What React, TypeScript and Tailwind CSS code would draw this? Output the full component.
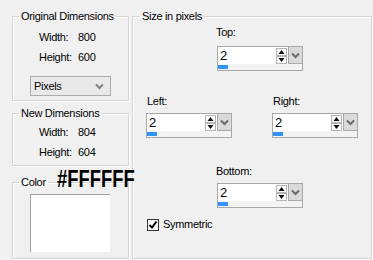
import React from "react";

const groupCls =
  "border border-[#d5d5d5] shadow-[inset_1px_1px_0_#fff,1px_1px_0_#fff] p-0 m-0 min-w-0";
const legendCls = "px-[2px] leading-[13px]";

const Row = ({ label, value }: { label: string; value: string }) => (
  <div className="flex leading-[13px] pl-[26px]">
    <span className="w-[39px]">{label}</span>
    <span>{value}</span>
  </div>
);

const Arrows = () => (
  <svg width="12" height="17" viewBox="0 0 12 17" className="block">
    <rect x="0.5" y="0.5" width="10" height="7" fill="#fff" stroke="#b5b5b5" />
    <rect x="0.5" y="8.5" width="10" height="7" fill="#fff" stroke="#b5b5b5" />
    <path d="M5.5 2 L8.5 6 L2.5 6 Z" fill="#111" />
    <path d="M2.5 10 L8.5 10 L5.5 14 Z" fill="#111" />
  </svg>
);

const Chevron = ({ color = "#6a6a6a" }: { color?: string }) => (
  <svg width="9" height="7" viewBox="0 0 9 7" className="block">
    <path d="M1 1.5 L4.5 5 L8 1.5" fill="none" stroke={color} strokeWidth="2" />
  </svg>
);

const Spin = () => (
  <div className="w-[86px] h-[25px] border border-[#a8a8a8] bg-[#f3f3f3] flex flex-col">
    <div className="flex h-[17px]">
      <div className="flex-1 bg-white text-[13px] leading-[17px] pl-[2px]">2</div>
      <div className="bg-white pt-px">
        <Arrows />
      </div>
      <div className="w-[14px] bg-[#dadada] border-l border-b border-[#a8a8a8] flex items-center justify-center">
        <Chevron />
      </div>
    </div>
    <div className="flex-1 pt-[1px] pl-0">
      <div className="w-[10px] h-[4px] bg-[#3394f5]" />
    </div>
  </div>
);

export default function App() {
  return (
    <div
      className="w-[373px] h-[260px] bg-[#f0f0f0] text-[11px] tracking-[-0.3px] text-black flex pl-[12px] pt-[10px] overflow-hidden"
      style={{ fontFamily: '"Liberation Sans", Arial, sans-serif' }}
    >
      <div className="relative w-[117px] flex flex-col">
        <fieldset className={`${groupCls} h-[91px]`}>
          <legend className={`${legendCls} ml-[6px]`}>Original Dimensions</legend>
          <div className="pt-[8px] flex flex-col gap-[7px]">
            <Row label="Width:" value="800" />
            <Row label="Height:" value="600" />
          </div>
          <div className="mt-[12px] ml-[17px] w-[81px] h-[20px] border border-[#acacac] bg-[#e9e9e9] flex items-center justify-between pl-[3px] pr-[6px]">
            <span>Pixels</span>
            <Chevron color="#808080" />
          </div>
        </fieldset>

        <fieldset className={`${groupCls} h-[59px] mt-[6px]`}>
          <legend className={`${legendCls} ml-[6px]`}>New Dimensions</legend>
          <div className="pt-[6px] flex flex-col gap-[7px]">
            <Row label="Width:" value="804" />
            <Row label="Height:" value="604" />
          </div>
        </fieldset>

        <fieldset className={`${groupCls} h-[83px] mt-[10px]`}>
          <legend className={`${legendCls} ml-[6px]`}>Color</legend>
          <div className="mt-[5px] ml-[17px] w-[80px] h-[58px] bg-white border-t border-l border-[#a0a0a0]" />
        </fieldset>

        <div className="absolute left-[45px] top-[158px] text-[23px] leading-[23px] font-bold tracking-normal whitespace-nowrap origin-left scale-x-[0.8]">
          #FFFFFF
        </div>
      </div>

      <fieldset className={`${groupCls} ml-[3px] w-[240px] h-[249px]`}>
        <legend className={`${legendCls} ml-[7px]`}>Size in pixels</legend>
        <div className="flex flex-col">
          <div className="ml-[83px] mt-[3px] leading-[13px]">Top:</div>
          <div className="ml-[84px] mt-[7px]">
            <Spin />
          </div>

          <div className="flex mt-[24px] ml-[13px]">
            <div className="flex flex-col">
              <div className="ml-[1px] leading-[13px]">Left:</div>
              <div className="mt-[5px]">
                <Spin />
              </div>
            </div>
            <div className="flex flex-col ml-[40px]">
              <div className="ml-[1px] leading-[13px]">Right:</div>
              <div className="mt-[5px]">
                <Spin />
              </div>
            </div>
          </div>

          <div className="ml-[83px] mt-[27px] leading-[13px]">Bottom:</div>
          <div className="ml-[84px] mt-[5px]">
            <Spin />
          </div>

          <div className="flex items-center ml-[14px] mt-[10px] gap-[4px]">
            <div className="w-[12px] h-[12px] border border-[#333] bg-white flex items-center justify-center">
              <svg width="10" height="10" viewBox="0 0 10 10" className="block">
                <path d="M1.5 5 L4 7.5 L8.5 1.5" fill="none" stroke="#000" strokeWidth="2" />
              </svg>
            </div>
            <span className="leading-[13px]">Symmetric</span>
          </div>
        </div>
      </fieldset>
    </div>
  );
}
